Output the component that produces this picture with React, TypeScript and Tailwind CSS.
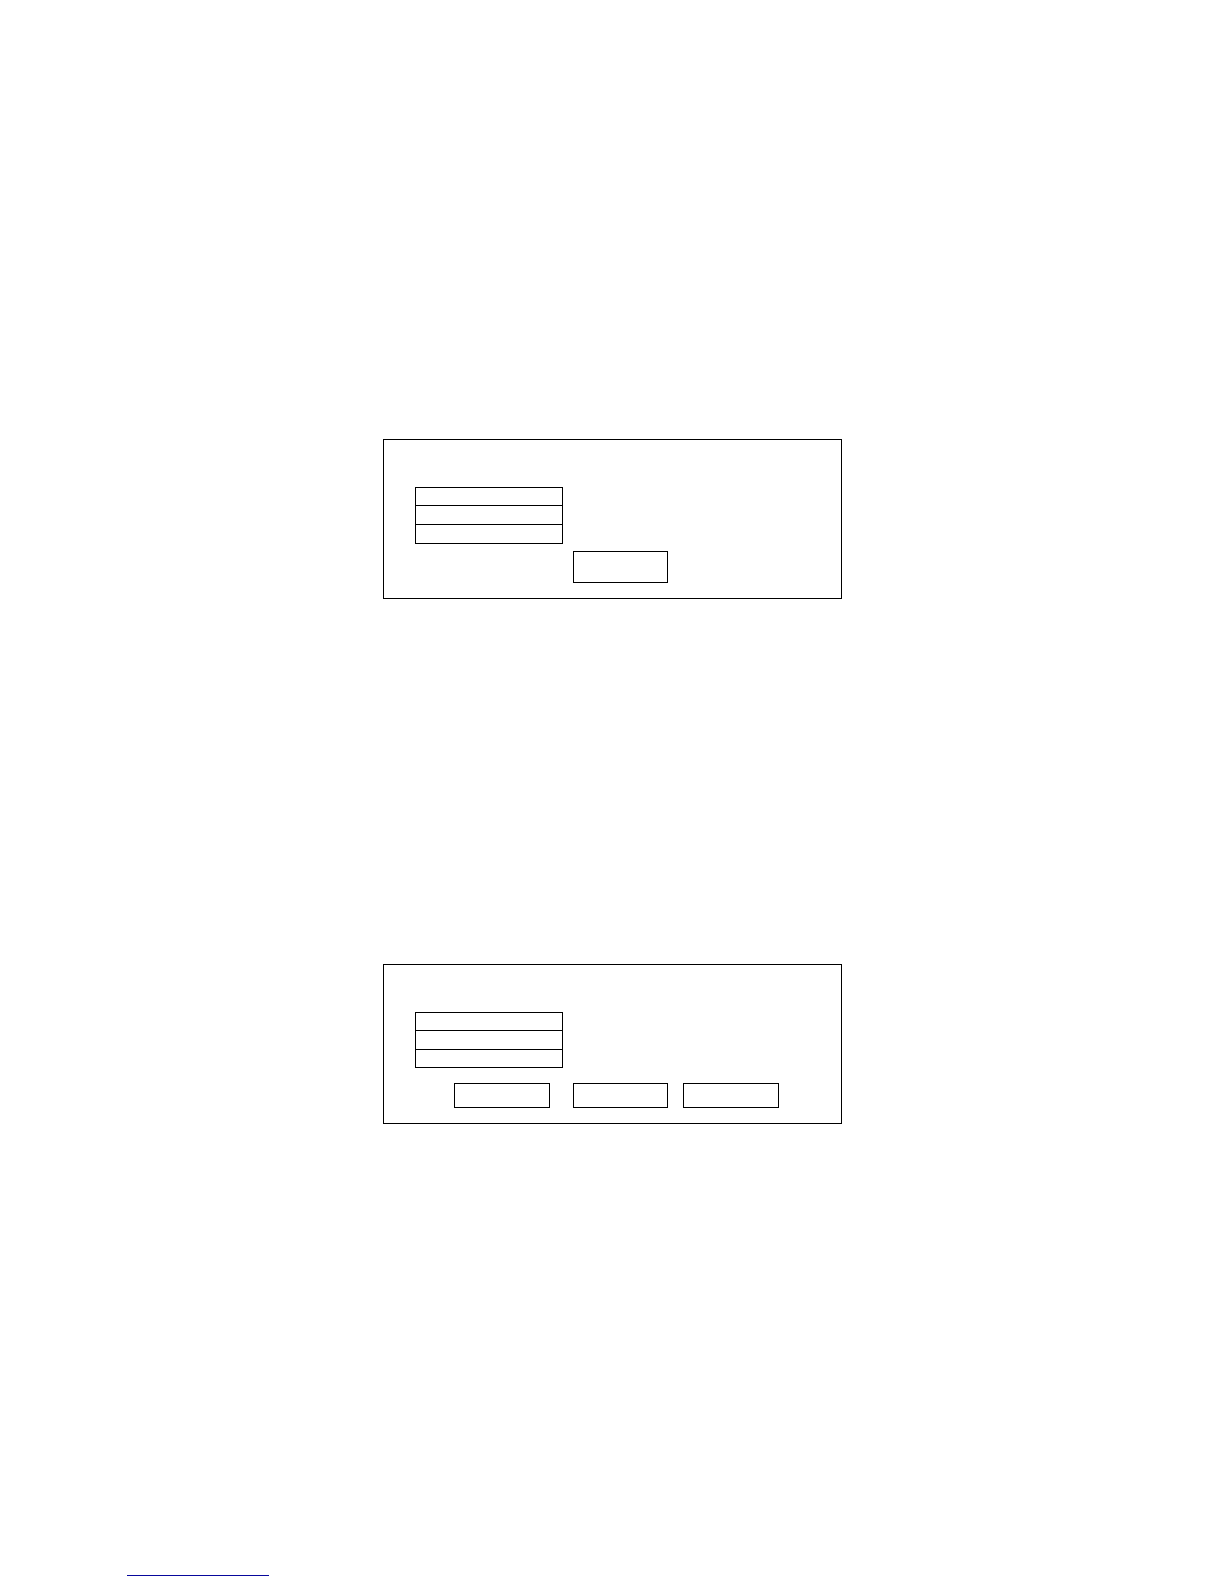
import { useState } from "react";
import type { ButtonHTMLAttributes, InputHTMLAttributes, ReactNode } from "react";

const Field = ({ className = "", ...props }: InputHTMLAttributes<HTMLInputElement>) => (
  <input
    type="text"
    className={`block w-full bg-white px-1 text-xs text-black outline-none ${className}`}
    {...props}
  />
);

const BoxButton = ({ className = "", ...props }: ButtonHTMLAttributes<HTMLButtonElement>) => (
  <button className={`border border-black bg-white ${className}`} {...props} />
);

const FieldList = ({ children }: { children: ReactNode }) => (
  <div className="w-[148px] divide-y divide-black border border-black">{children}</div>
);

const Panel = ({ label, children }: { label: string; children: ReactNode }) => {
  // nothing is sent anywhere yet
  return (
    <form
      aria-label={label}
      onSubmit={(e) => e.preventDefault()}
      className="mx-auto w-full max-w-[459px] border border-black pt-[47px] pr-4 pb-[15px] pl-[31px]"
    >
      {children}
    </form>
  );
};

const App = () => {
  const [entry, setEntry] = useState(["", "", ""]);
  const [record, setRecord] = useState(["", "", ""]);

  const update = (list: string[], index: number, value: string) =>
    list.map((item, i) => (i === index ? value : item));

  return (
    <main className="flex min-h-screen flex-col bg-white pt-[439px] pb-2 pl-px font-['Liberation_Sans',sans-serif]">
      <div className="flex flex-col gap-[365px]">
        <Panel label="New entry">
          <FieldList>
            <Field
              className="h-[18px]"
              aria-label="Entry field 1"
              value={entry[0]}
              onChange={(e) => setEntry(update(entry, 0, e.target.value))}
            />
            <Field
              className="h-[19px]"
              aria-label="Entry field 2"
              value={entry[1]}
              onChange={(e) => setEntry(update(entry, 1, e.target.value))}
            />
            <Field
              className="h-[18px]"
              aria-label="Entry field 3"
              value={entry[2]}
              onChange={(e) => setEntry(update(entry, 2, e.target.value))}
            />
          </FieldList>
          <div className="mt-[7px] flex pl-[158px]">
            <BoxButton type="submit" aria-label="Submit" className="h-8 w-[95px]" />
          </div>
        </Panel>

        <Panel label="Edit record">
          <FieldList>
            <Field
              className="h-[18px]"
              aria-label="Record field 1"
              value={record[0]}
              onChange={(e) => setRecord(update(record, 0, e.target.value))}
            />
            <Field
              className="h-[19px]"
              aria-label="Record field 2"
              value={record[1]}
              onChange={(e) => setRecord(update(record, 1, e.target.value))}
            />
            <Field
              className="h-[17px]"
              aria-label="Record field 3"
              value={record[2]}
              onChange={(e) => setRecord(update(record, 2, e.target.value))}
            />
          </FieldList>
          <div className="mt-[15px] flex pl-[39px]">
            <BoxButton type="button" aria-label="Previous" className="h-[25px] w-24" />
            <BoxButton type="submit" aria-label="Save" className="ml-[23px] h-[25px] w-[95px]" />
            <BoxButton type="button" aria-label="Next" className="ml-[15px] h-[25px] w-24" />
          </div>
        </Panel>
      </div>

      <footer className="mt-auto pl-[126px]">
        <a href="#" aria-label="Contact" className="block h-4 w-[142px] border-b border-[#08089c]" />
      </footer>
    </main>
  );
};

export default App;
